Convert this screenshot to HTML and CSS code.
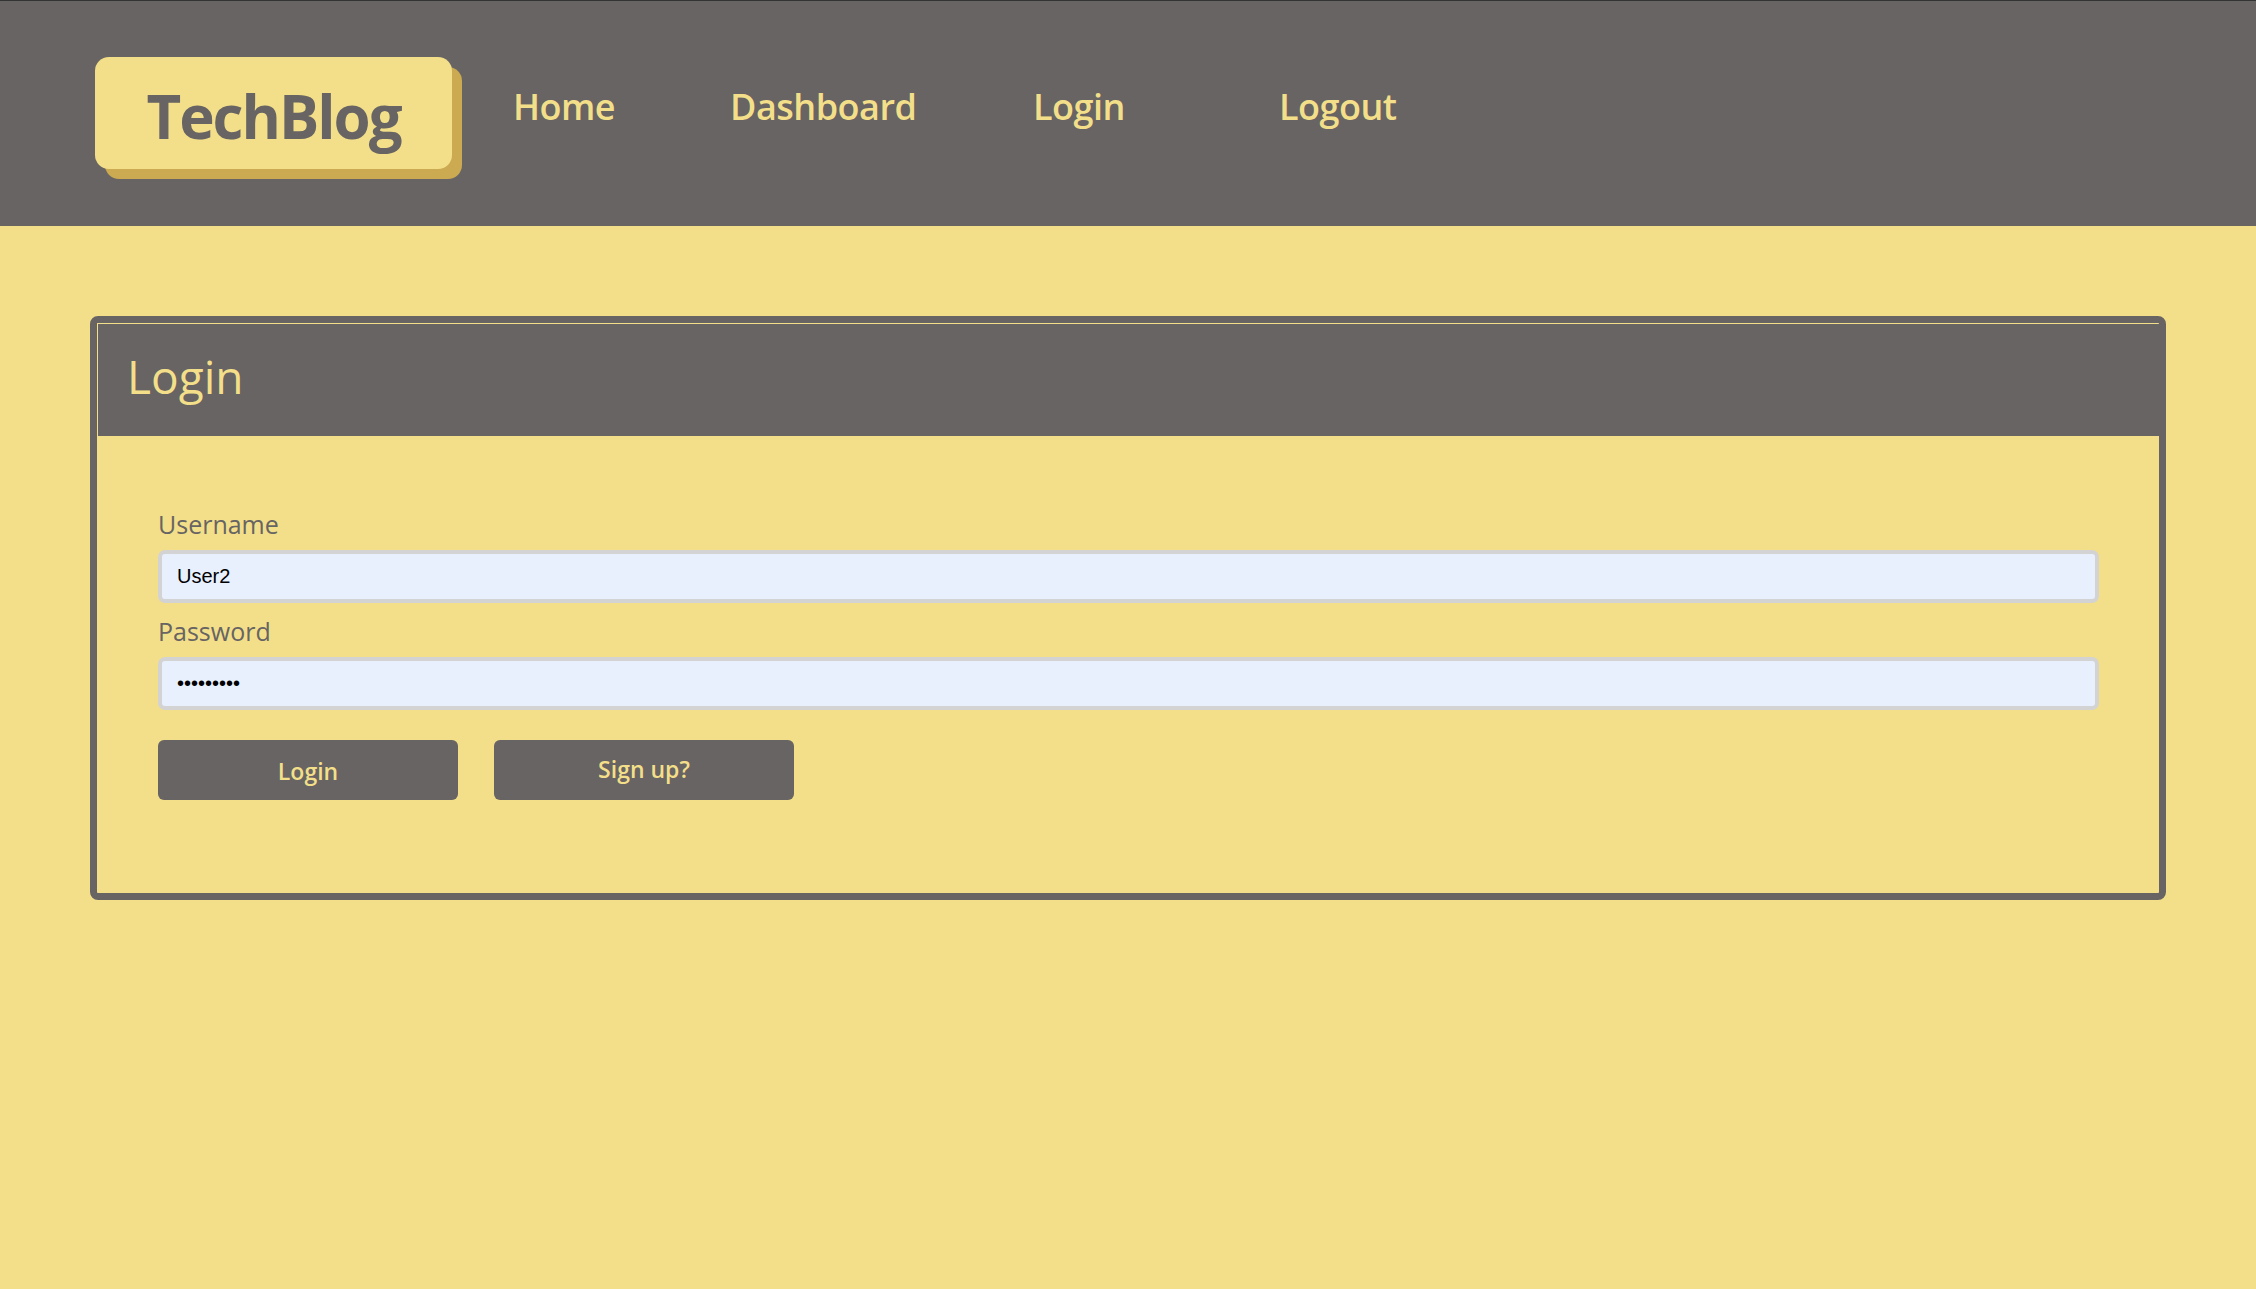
FILE: index.html
```html
<!DOCTYPE html>
<html lang="en">
<head>
<meta charset="utf-8">
<title>TechBlog - Login</title>
<link rel="stylesheet" href="styles.css">
</head>
<body>
<header class="site-header">
  <div class="logo"><span class="logo-text">TechBlog</span></div>
  <nav class="nav">
    <a class="nav-link nav-home" href="#">Home</a>
    <a class="nav-link nav-dash" href="#">Dashboard</a>
    <a class="nav-link nav-login" href="#">Login</a>
    <a class="nav-link nav-logout" href="#">Logout</a>
  </nav>
</header>
<main class="main">
  <section class="card">
    <div class="card-header"><h2 class="card-title">Login</h2></div>
    <form class="card-body">
      <label class="field-label" for="username">Username</label>
      <input class="field-input" id="username" type="text" value="User2">
      <label class="field-label" for="password">Password</label>
      <input class="field-input" id="password" type="password" value="123456789">
      <div class="actions">
        <button class="btn" type="button">Login</button>
        <a class="btn btn-link" href="#">Sign up?</a>
      </div>
    </form>
  </section>
</main>
</body>
</html>
```
FILE: styles.css
```css
* { box-sizing: border-box; }

body {
  margin: 0;
  background: #f3df89;
  font-family: "Open Sans", "Noto Sans", sans-serif;
  min-height: 1289px;
}

.site-header {
  height: 226px;
  background: #676463;
  border-top: 1px solid #333;
  padding: 56px 0 0 95px;
  display: flex;
  align-items: flex-start;
}

.logo {
  width: 357px;
  height: 112px;
  background: #f3df89;
  border-radius: 14px;
  box-shadow: 10px 10px 0 #ccaa52;
  display: flex;
  align-items: center;
  justify-content: center;
  padding-top: 6px;
}

.logo-text {
  color: #676463;
  font-size: 60px;
  font-weight: 700;
  letter-spacing: -2px;
}

.nav {
  display: flex;
  margin-left: 61px;
  margin-top: 25px;
}

.nav-link {
  color: #f3df89;
  font-size: 36px;
  font-weight: 600;
  text-decoration: none;
  letter-spacing: -0.5px;
}

.nav-home { width: 217px; }
.nav-dash { width: 303px; }
.nav-login { width: 246px; }

.main {
  padding: 90px 90px;
}

.card {
  border: 7px solid #676463;
  border-radius: 8px;
  overflow: hidden;
}

.card-header {
  height: 113px;
  background: #676463;
  border-top: 1px solid #f3df89;
  border-left: 1px solid #f3df89;
  padding: 21px 29px 0;
}

.card-title {
  margin: 0;
  color: #f3df89;
  font-size: 46px;
  font-weight: 400;
  line-height: 1.362;
}

.card-body {
  padding: 71px 60px 93px 61px;
}

.field-label {
  display: block;
  color: #676463;
  font-size: 25px;
  line-height: 34px;
  margin-bottom: 9px;
}

.field-input {
  display: block;
  width: 100%;
  height: 53px;
  border: 4px solid #d3d3d3;
  border-radius: 7px;
  background: #e8f0fe;
  padding: 0 15px;
  font-family: "Liberation Sans", Arial, sans-serif;
  font-size: 20px;
  color: #000;
  margin-bottom: 11px;
  outline: none;
}

.actions {
  display: flex;
  gap: 36px;
  margin-top: 30px;
}

.btn {
  width: 300px;
  height: 60px;
  border: none;
  border-radius: 6px;
  background: #676463;
  color: #f3df89;
  font-family: "Open Sans", "Noto Sans", sans-serif;
  font-size: 23px;
  font-weight: 600;
  display: flex;
  align-items: center;
  justify-content: center;
  text-decoration: none;
  padding: 2px 0 0;
  cursor: pointer;
}

.btn-link {
  padding: 0 0 2px;
}
```
